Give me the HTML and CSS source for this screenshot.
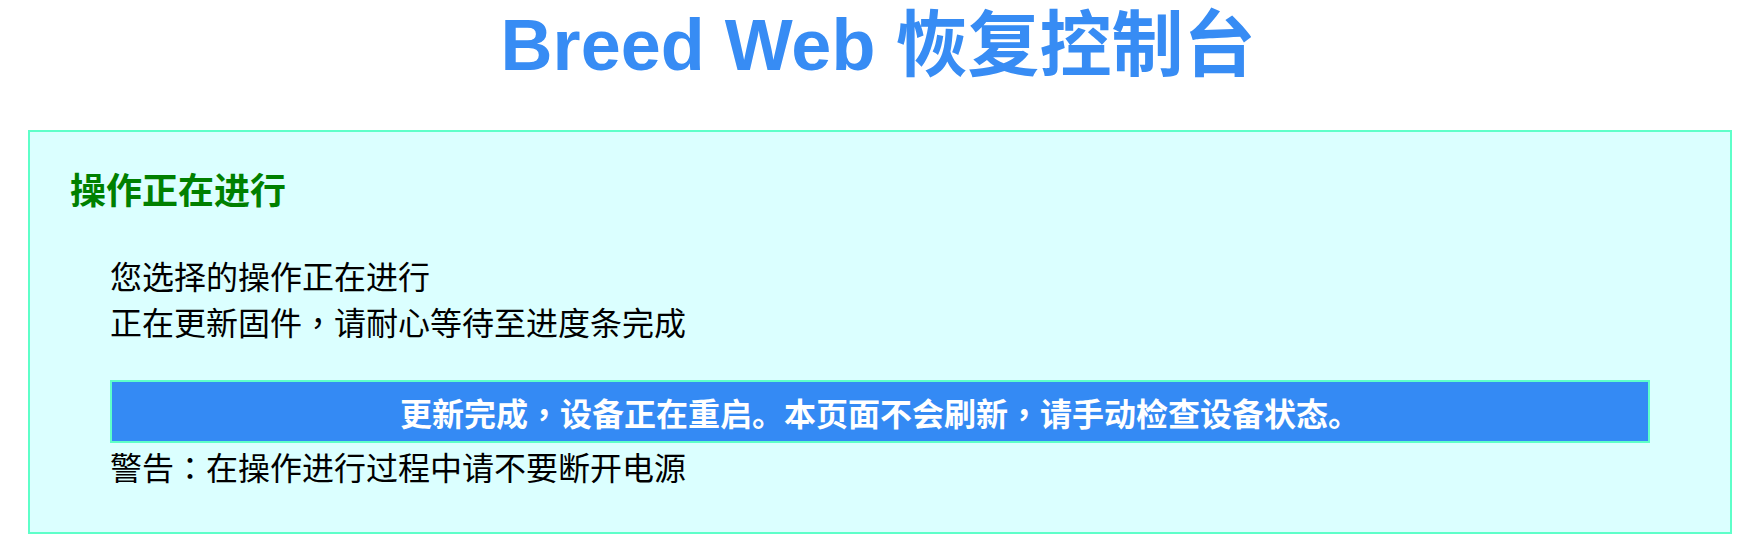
FILE: index.html
```html
<!DOCTYPE html>
<html>
<head>
<meta charset="utf-8">
<title>Breed Web 恢复控制台</title>
<link rel="stylesheet" href="styles.css">
</head>
<body>
<h1 class="title">Breed Web 恢复控制台</h1>
<div class="panel">
  <h2 class="panel-title">操作正在进行</h2>
  <div class="panel-body">
    <p class="line">您选择的操作正在进行</p>
    <p class="line">正在更新固件<span class="punct">，</span>请耐心等待至进度条完成</p>
    <div class="progress">更新完成<span class="punct">，</span>设备正在重启。本页面不会刷新<span class="punct">，</span>请手动检查设备状态。</div>
    <p class="line">警告<span class="punct">：</span>在操作进行过程中请不要断开电源</p>
  </div>
</div>
</body>
</html>
```

FILE: styles.css
```css
html, body {
  margin: 0;
  padding: 0;
  background: #ffffff;
}

body {
  font-family: "Liberation Sans", "Noto Sans CJK SC", sans-serif;
  padding: 0 24px 0 28px;
}

.punct {
  font-family: "Liberation Sans", "Noto Sans CJK TC", sans-serif;
}

.title {
  margin: 0;
  font-size: 72px;
  line-height: 90px;
  font-weight: bold;
  color: #378cf4;
  text-align: center;
  margin-left: -28px;
  margin-right: -24px;
}

.panel {
  margin-top: 40px;
  border: 2px solid #5effc9;
  background: #dbffff;
  padding: 30px 40px 43px 40px;
}

.panel-title {
  margin: 0;
  font-size: 36px;
  font-weight: bold;
  color: #008000;
}

.panel-body {
  margin: 38px 40px 0 40px;
}

.line {
  margin: 0;
  font-size: 32px;
  color: #000000;
}

.progress {
  margin-top: 36px;
  border: 2px solid #5effc9;
  background: #348af4;
  color: #ffffff;
  font-size: 32px;
  font-weight: bold;
  text-align: center;
  padding: 7px 0 6px 0;
}
```
